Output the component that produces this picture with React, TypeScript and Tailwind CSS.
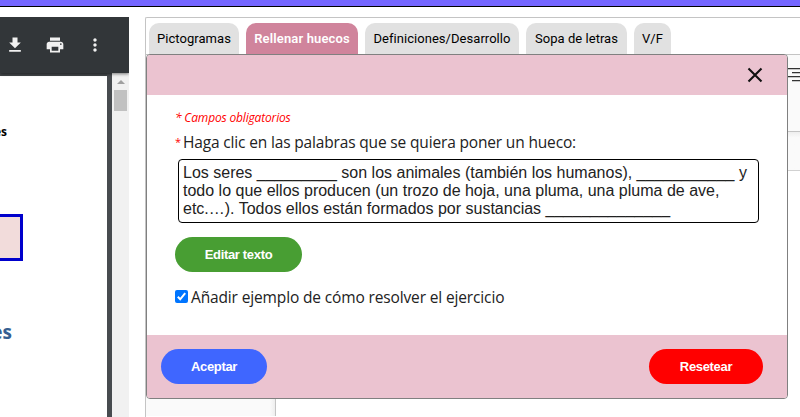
import type { ReactNode } from "react";
import { MdFileDownload, MdMoreVert, MdPrint } from "react-icons/md";

const ARIAL = "font-['Liberation_Sans',Arial,sans-serif]";
const SEGOE = "font-['Open_Sans','Noto_Sans',sans-serif]";

function Tab({ width, active, children }: { width: string; active?: boolean; children: ReactNode }) {
  return (
    <div
      className={`flex h-[31px] shrink-0 items-center justify-center rounded-t-[10px] text-[13px] whitespace-nowrap ${width} ${
        active ? "bg-[#d0849c] font-semibold tracking-[0.15px] text-white" : "bg-[#e1e1e1] tracking-[0.04px] text-black"
      } font-[Roboto,sans-serif]`}
    >
      {children}
    </div>
  );
}

function Pill({ className, children }: { className: string; children: ReactNode }) {
  return (
    <button className={`h-[35px] rounded-full text-[13px] font-bold tracking-[-0.33px] text-white ${ARIAL} ${className}`}>
      {children}
    </button>
  );
}

function Viewer() {
  return (
    <div className="flex h-[400px] w-[129px] shrink-0 flex-col overflow-hidden bg-[#414548]">
      <div className="relative z-10 flex h-14 shrink-0 items-center bg-[#323639] text-[#f1f1f1] shadow-[0_1px_3px_rgba(0,0,0,0.5)]">
        <div className="flex w-[110px] gap-5 pl-[5px]">
          <MdFileDownload size={20} />
          <MdPrint size={20} />
          <MdMoreVert size={20} />
        </div>
      </div>
      <div className="flex flex-1">
        <div className="mt-[3px] h-[341px] w-[107px] overflow-hidden bg-white font-['Open_Sans','Noto_Sans',sans-serif]">
          <div className="mt-[48px] flex h-4 w-[7px] items-center justify-end text-[12px] leading-4 font-bold text-black">
            <span>es</span>
          </div>
          <div className="mt-[74px] h-[47px] w-[23px] border-y-[3px] border-r-[3px] border-[#0000cc] bg-[#f2dcdb]" />
          <div className="mt-[59px] flex h-6 w-[12px] items-center justify-end text-[19px] leading-6 font-bold text-[#365f91]">
            <span>es</span>
          </div>
        </div>
        <div className="w-[5px] bg-[#474b4f]" />
        <div className="flex w-[17px] flex-col items-center bg-[#f1f1f1]">
          <svg className="mt-[7px] block" width="8" height="4" viewBox="0 0 8 4">
            <path d="M0 4 4 0 8 4Z" fill="#a0a0a0" />
          </svg>
          <div className="mt-[6px] h-[21px] w-[13px] bg-[#c1c1c1]" />
        </div>
      </div>
    </div>
  );
}

function Editor() {
  return (
    <div className="flex h-[362px] flex-col">
      <div className="flex h-[78px] shrink-0 justify-end border-y border-[#c4c4c4] bg-[#fafafa]">
        <svg className="mt-[13px]" width="16" height="14" viewBox="0 0 16 14" stroke="#333" strokeWidth="1.3">
          <path d="M3 .6H16M8 4.6H16M3 8.6H16M8 12.6H16" />
        </svg>
      </div>
      <div className="h-[39px] shrink-0 border-b border-[#d1d1d1] bg-gradient-to-b from-[#eeeeee] via-[#fafafa] via-15% to-[#fafafa]" />
      <div className="flex flex-1">
        <div className="w-[130px] border-r border-[#c4c4c4] bg-[linear-gradient(to_right,#fafafa_96%,#eeeeee)]" />
        <div className="flex-1 bg-white" />
      </div>
    </div>
  );
}

function GapDialog() {
  return (
    <div className="absolute top-[54px] left-[146px] flex h-[345px] w-[642px] flex-col overflow-hidden rounded-[4px] border border-[#808080] bg-white">
      <div className="flex h-10 shrink-0 items-center justify-end bg-[#ebc3d0] pr-[24px]">
        <svg width="16" height="16" viewBox="0 0 16 16" stroke="#111" strokeWidth="2.1">
          <path d="M1.5 1.5 14.5 14.5M14.5 1.5 1.5 14.5" />
        </svg>
      </div>
      <div className="h-60 shrink-0 pr-7 pl-7">
        <p className={`mt-[13px] h-5 text-[12px] leading-5 tracking-[-0.17px] whitespace-nowrap text-[#ff0000] italic ${SEGOE}`}>
          * Campos obligatorios
        </p>
        <p className={`mt-[2px] flex h-6 text-[15.5px] leading-6 whitespace-nowrap text-[#222] ${SEGOE}`}>
          <span className="w-2 text-[11px] text-[#ff0000]">*</span>
          <span className="tracking-[-0.16px]">Haga clic en las palabras que se quiera poner un hueco:</span>
        </p>
        <div
          className={`mt-[5px] ml-[3px] h-16 w-[581px] rounded-[4px] border border-black px-1 pt-1 text-[16px] leading-[18px] whitespace-nowrap text-[#222] ${ARIAL}`}
        >
          <p>Los seres _________ son los animales (también los humanos), ___________ y</p>
          <p>todo lo que ellos producen (un trozo de hoja, una pluma, una pluma de ave,</p>
          <p>etc.…). Todos ellos están formados por sustancias ______________</p>
        </div>
        <Pill className="mt-[14px] block w-[127px] bg-[#489e33]">Editar texto</Pill>
        <label className={`mt-[13px] flex h-6 items-center text-[15.5px] leading-6 whitespace-nowrap text-[#222] ${SEGOE}`}>
          <svg className="mr-[3px] mb-px" width="13" height="13" viewBox="0 0 13 13">
            <rect width="13" height="13" rx="2" fill="#0075ff" />
            <path d="M2.8 6.8 5.2 9.3 10.2 3.2" fill="none" stroke="white" strokeWidth="2" />
          </svg>
          <span className="tracking-[-0.14px]">Añadir ejemplo de cómo resolver el ejercicio</span>
        </label>
      </div>
      <div className="flex flex-1 items-start justify-between bg-[#ebc3d0] px-[14px] pt-[14px]">
        <Pill className="w-[106px] bg-[#3f66ff]">Aceptar</Pill>
        <Pill className="mr-[10px] w-[114px] bg-[#ff0000]">Resetear</Pill>
      </div>
    </div>
  );
}

export default function App() {
  return (
    <div className="relative h-[417px] w-[800px] overflow-hidden bg-white">
      <div className="h-[7px] border-b border-black bg-[#7566ff]" />
      <div className="mt-[10px] flex">
        <Viewer />
        <div className="ml-4 h-[410px] flex-1 overflow-hidden rounded-tl-[2px] border-t border-l border-[#c4c4c4]">
          <div className="mt-[5px] flex h-[31px] gap-[7px] pl-[3px]">
            <Tab width="w-[90px]">Pictogramas</Tab>
            <Tab width="w-[112px]" active>Rellenar huecos</Tab>
            <Tab width="w-[154px]">Definiciones/Desarrollo</Tab>
            <Tab width="w-[101px]">Sopa de letras</Tab>
            <Tab width="w-[37px]">V/F</Tab>
          </div>
          <Editor />
        </div>
      </div>
      <GapDialog />
    </div>
  );
}
